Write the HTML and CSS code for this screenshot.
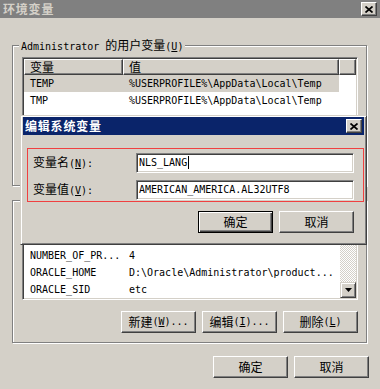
FILE: index.html
```html
<!DOCTYPE html>
<html lang="zh-CN">
<head>
<meta charset="UTF-8">
<title>环境变量</title>
<link rel="stylesheet" href="styles.css">
</head>
<body>
<div class="window">
<div class="titlebar titlebar-inactive">
<span class="title zh">环境变量</span>
<button class="close-btn"><svg width="8" height="7" viewBox="0 0 8 7"><path d="M0.5 0.5L7.5 6.5M7.5 0.5L0.5 6.5" stroke="#000" stroke-width="1.7" fill="none"/></svg></button>
</div>
<div class="window-body">
<!-- the user group's buttons sit under the edit dialog, so only the list is drawn -->
<div class="group group-user">
<div class="group-title">Administrator <span class="zh">的用户变量</span>(<u>U</u>)</div>
<div class="list list-user">
<div class="list-main">
<div class="list-header">
<div class="col col-name zh">变量</div>
<div class="col col-value zh">值</div>
<div class="col col-fill"></div>
</div>
<div class="list-row selected">
<div class="col col-name">TEMP</div>
<div class="col col-value">%USERPROFILE%\AppData\Local\Temp</div>
</div>
<div class="list-row">
<div class="col col-name">TMP</div>
<div class="col col-value">%USERPROFILE%\AppData\Local\Temp</div>
</div>
</div>
</div>
</div>
<div class="group group-system">
<div class="list list-system">
<div class="list-main">
<div class="list-header"></div>
<div class="list-row"></div>
<div class="list-row">
<div class="col col-name">NUMBER_OF_PR...</div>
<div class="col col-value">4</div>
</div>
<div class="list-row">
<div class="col col-name">ORACLE_HOME</div>
<div class="col col-value">D:\Oracle\Administrator\product...</div>
</div>
<div class="list-row">
<div class="col col-name">ORACLE_SID</div>
<div class="col col-value">etc</div>
</div>
</div>
<div class="vscroll">
<div class="scroll-btn"><svg width="7" height="4" viewBox="0 0 7 4"><path d="M3.5 0L7 4H0Z" fill="#000"/></svg></div>
<div class="scroll-thumb"></div>
<div class="scroll-track"></div>
<div class="scroll-btn"><svg width="7" height="4" viewBox="0 0 7 4"><path d="M0 0H7L3.5 4Z" fill="#000"/></svg></div>
</div>
</div>
<div class="btn-row">
<button class="btn"><span class="zh">新建</span>(<u>W</u>)...</button>
<button class="btn"><span class="zh">编辑</span>(<u>I</u>)...</button>
<button class="btn"><span class="zh">删除</span>(<u>L</u>)</button>
</div>
</div>
<div class="footer">
<button class="btn zh">确定</button>
<button class="btn zh">取消</button>
</div>
</div>

<div class="dialog">
<div class="titlebar titlebar-active">
<span class="title zh">编辑系统变量</span>
<button class="close-btn"><svg width="8" height="7" viewBox="0 0 8 7"><path d="M0.5 0.5L7.5 6.5M7.5 0.5L0.5 6.5" stroke="#000" stroke-width="1.7" fill="none"/></svg></button>
</div>
<div class="dialog-body">
<div class="field">
<div class="field-label"><span class="zh">变量名</span>(<u>N</u>):</div>
<div class="textbox">NLS_LANG<span class="caret"></span></div>
</div>
<div class="field">
<div class="field-label"><span class="zh">变量值</span>(<u>V</u>):</div>
<div class="textbox">AMERICAN_AMERICA.AL32UTF8</div>
</div>
<div class="dialog-buttons">
<button class="btn btn-default zh">确定</button>
<button class="btn zh">取消</button>
</div>
<div class="highlight"></div>
</div>
</div>
</div>
</body>
</html>
```

FILE: styles.css
```css
* {
box-sizing: border-box;
}
body {
margin: 0;
width: 380px;
height: 389px;
overflow: hidden;
background-color: #d4d0c8;
font-family: "DejaVu Sans Mono", "Noto Sans CJK SC", monospace;
font-size: 10px;
line-height: 12px;
color: #000;
}
.zh {
font-family: "Noto Sans CJK SC", sans-serif;
font-size: 12px;
}
.window {
position: relative;
width: 380px;
height: 389px;
}

/* title bars */
.titlebar {
display: flex;
align-items: center;
justify-content: space-between;
height: 18px;
padding: 0 3px;
}
.titlebar-inactive {
background-color: #808080;
color: #d4d0c8;
}
.titlebar-active {
background-color: #0a246a;
color: #fff;
padding: 0 2px;
}
.title {
font-weight: bold;
line-height: 14px;
letter-spacing: 0.8px;
}
.close-btn {
width: 16px;
height: 14px;
padding: 0;
display: flex;
align-items: center;
justify-content: center;
background-color: #d4d0c8;
border: 1px solid;
border-color: #fff #404040 #404040 #fff;
box-shadow: inset -1px -1px #808080;
}

/* buttons */
.btn {
width: 75px;
height: 22px;
padding: 0;
display: flex;
align-items: center;
justify-content: center;
background-color: #d4d0c8;
border: 1px solid;
border-color: #fff #404040 #404040 #fff;
box-shadow: inset -1px -1px #808080;
font: inherit;
color: #000;
}
.btn.zh {
font-family: "Noto Sans CJK SC", sans-serif;
font-size: 12px;
}
.btn-default {
border-color: #000;
box-shadow: inset 1px 1px #fff, inset -1px -1px #404040, inset -2px -2px #808080;
}
.btn-row {
display: flex;
justify-content: flex-end;
gap: 6px;
margin-top: 11px;
}

/* group boxes */
.window-body {
padding: 27px 13px 0 12px;
}
.group {
border: 1px solid #808080;
box-shadow: inset 1px 1px #fff, 1px 1px #fff;
padding: 0 8px 9px 9px;
}
.group-user {
padding-bottom: 36px;
}
.group-system {
margin-top: 14px;
padding-top: 5px;
}
.group-title {
width: fit-content;
height: 12px;
margin: -7px 0 0 -3px;
padding: 0 2px;
background-color: #d4d0c8;
white-space: nowrap;
}

/* list views */
.list {
display: flex;
margin-top: 6px;
padding: 1px;
background-color: #fff;
border: 1px solid;
border-color: #808080 #fff #fff #808080;
box-shadow: inset 1px 1px #404040, inset -1px -1px #d4d0c8;
overflow: hidden;
}
.list-user {
height: 92px;
}
.list-system {
height: 88px;
}
.list-main {
flex: 1;
}
.list-header {
display: flex;
height: 16px;
}
.list-header .col {
background-color: #d4d0c8;
border: 1px solid;
border-color: #fff #404040 #404040 #fff;
box-shadow: inset -1px -1px #808080;
padding-left: 5px;
line-height: 14px;
}
.col-name {
width: 99px;
flex-shrink: 0;
}
.col-value {
width: 216px;
flex-shrink: 0;
}
.list-header .col-fill {
flex: 1;
}
.list-row {
display: flex;
height: 17px;
line-height: 17px;
}
.list-row .col {
padding-left: 6px;
white-space: nowrap;
overflow: hidden;
}
.list-row.selected .col {
background-color: #d4d0c8;
}

/* scrollbar */
.vscroll {
width: 16px;
display: flex;
flex-direction: column;
background: repeating-conic-gradient(#fff 0 25%, #d4d0c8 0 50%) 0 0 / 2px 2px;
}
.scroll-btn, .scroll-thumb {
background-color: #d4d0c8;
border: 1px solid;
border-color: #d4d0c8 #404040 #404040 #d4d0c8;
box-shadow: inset 1px 1px #fff, inset -1px -1px #808080;
}
.scroll-btn {
height: 16px;
display: flex;
align-items: center;
justify-content: center;
}
.scroll-thumb {
height: 14px;
}
.scroll-track {
flex: 1;
}

.footer {
display: flex;
justify-content: flex-end;
gap: 6px;
margin: 13px -2px 0 0;
}

/* edit dialog */
.dialog {
position: absolute;
left: 20px;
top: 115px;
width: 347px;
height: 130px;
padding: 1px 2px 2px 2px;
background-color: #d4d0c8;
border: 1px solid;
border-color: #d4d0c8 #404040 #404040 #d4d0c8;
box-shadow: inset 1px 1px #fff, inset -1px -1px #808080;
}
.dialog-body {
position: relative;
padding: 18px 10px 0 10px;
}
.field {
display: flex;
align-items: center;
height: 20px;
}
.field + .field {
margin-top: 7px;
}
.field-label {
width: 103px;
white-space: nowrap;
}
.textbox {
width: 218px;
height: 20px;
padding-left: 2px;
line-height: 18px;
background-color: #fff;
border: 1px solid;
border-color: #808080 #fff #fff #808080;
box-shadow: inset 1px 1px #404040, inset -1px -1px #d4d0c8;
white-space: nowrap;
}
.caret {
display: inline-block;
width: 1px;
height: 13px;
margin-left: 1px;
vertical-align: -3px;
background-color: #000;
}
.dialog-buttons {
display: flex;
justify-content: flex-end;
gap: 6px;
margin-top: 11px;
}
.highlight {
position: absolute;
left: 4px;
top: 13px;
width: 337px;
height: 54px;
border: 1px solid #f04040;
pointer-events: none;
}
```
